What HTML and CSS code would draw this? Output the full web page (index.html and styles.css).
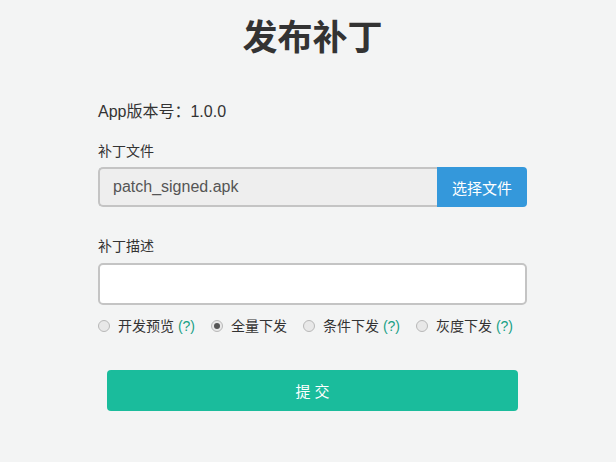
FILE: index.html
```html
<!DOCTYPE html>
<html lang="zh-CN">
<head>
  <meta charset="UTF-8" />
  <meta name="viewport" content="width=device-width, initial-scale=1.0"/>
  <title>发布补丁</title>
  <link rel="stylesheet" href="styles.css">
</head>
<body>
  <div class="page">
    <h1 class="title">发布补丁</h1>

    <p class="version">App版本号：1.0.0</p>

    <label class="label">补丁文件</label>
    <div class="file-group">
      <div class="file-name">patch_signed.apk</div>
      <button class="file-btn">选择文件</button>
    </div>

    <label class="label label-desc">补丁描述</label>
    <textarea class="desc"></textarea>

    <div class="radios">
      <label class="radio"><span class="dot"></span>开发预览 <span class="help">(?)</span></label>
      <label class="radio"><span class="dot checked"></span>全量下发</label>
      <label class="radio"><span class="dot"></span>条件下发 <span class="help">(?)</span></label>
      <label class="radio"><span class="dot"></span>灰度下发 <span class="help">(?)</span></label>
    </div>

    <button class="submit">提 交</button>
  </div>
</body>
</html>
```

FILE: styles.css
```css
body {
  margin: 0;
  background-color: #f3f4f4;
  color: #333;
  font-family: "Liberation Sans", Arial, "Noto Sans CJK SC", sans-serif;
}
.page {
  width: 429px;
  margin-left: 98px;
  padding-top: 16px;
}
.title {
  margin: 0;
  text-align: center;
  font-size: 35px;
  font-weight: bold;
  line-height: 44px;
  color: #333;
}
.version {
  margin: 41px 0 0;
  font-size: 16px;
  line-height: 22px;
}
.label {
  display: block;
  margin-top: 18px;
  font-size: 14px;
  line-height: 20px;
  color: #333;
}
.label-desc {
  margin-top: 29px;
}
.file-group {
  display: flex;
  height: 40px;
  margin-top: 6px;
}
.file-name {
  flex: 1;
  box-sizing: border-box;
  background: #eee;
  border: 2px solid #c4c4c4;
  border-right: none;
  border-radius: 5px 0 0 5px;
  padding: 0 13px;
  line-height: 36px;
  font-size: 16px;
  color: #555;
}
.file-btn {
  width: 90px;
  border: none;
  border-radius: 0 4px 4px 0;
  background: #3498db;
  color: white;
  font-family: inherit;
  font-size: 15px;
  padding: 0;
}
.desc {
  display: block;
  box-sizing: border-box;
  width: 100%;
  height: 42px;
  margin-top: 7px;
  background: white;
  border: 2px solid #c4c4c4;
  border-radius: 5px;
  resize: none;
}
.radios {
  display: flex;
  align-items: center;
  gap: 16px;
  margin-top: 12px;
  font-size: 14px;
  line-height: 18px;
  color: #333;
}
.radio {
  display: flex;
  align-items: center;
  white-space: pre;
}
.dot {
  box-sizing: border-box;
  width: 12px;
  height: 12px;
  margin-right: 8px;
  border: 1px solid #b8b8b8;
  border-radius: 50%;
  background: #e8e8e8;
  position: relative;
}
.dot.checked::after {
  content: "";
  position: absolute;
  left: 2px;
  top: 2px;
  width: 6px;
  height: 6px;
  border-radius: 50%;
  background: #555;
}
.help {
  color: #16a085;
}
.submit {
  display: block;
  width: 411px;
  height: 41px;
  margin: 35px 0 0 9px;
  border: none;
  border-radius: 4px;
  background: #1abc9c;
  color: white;
  font-family: inherit;
  font-size: 15px;
}
```
